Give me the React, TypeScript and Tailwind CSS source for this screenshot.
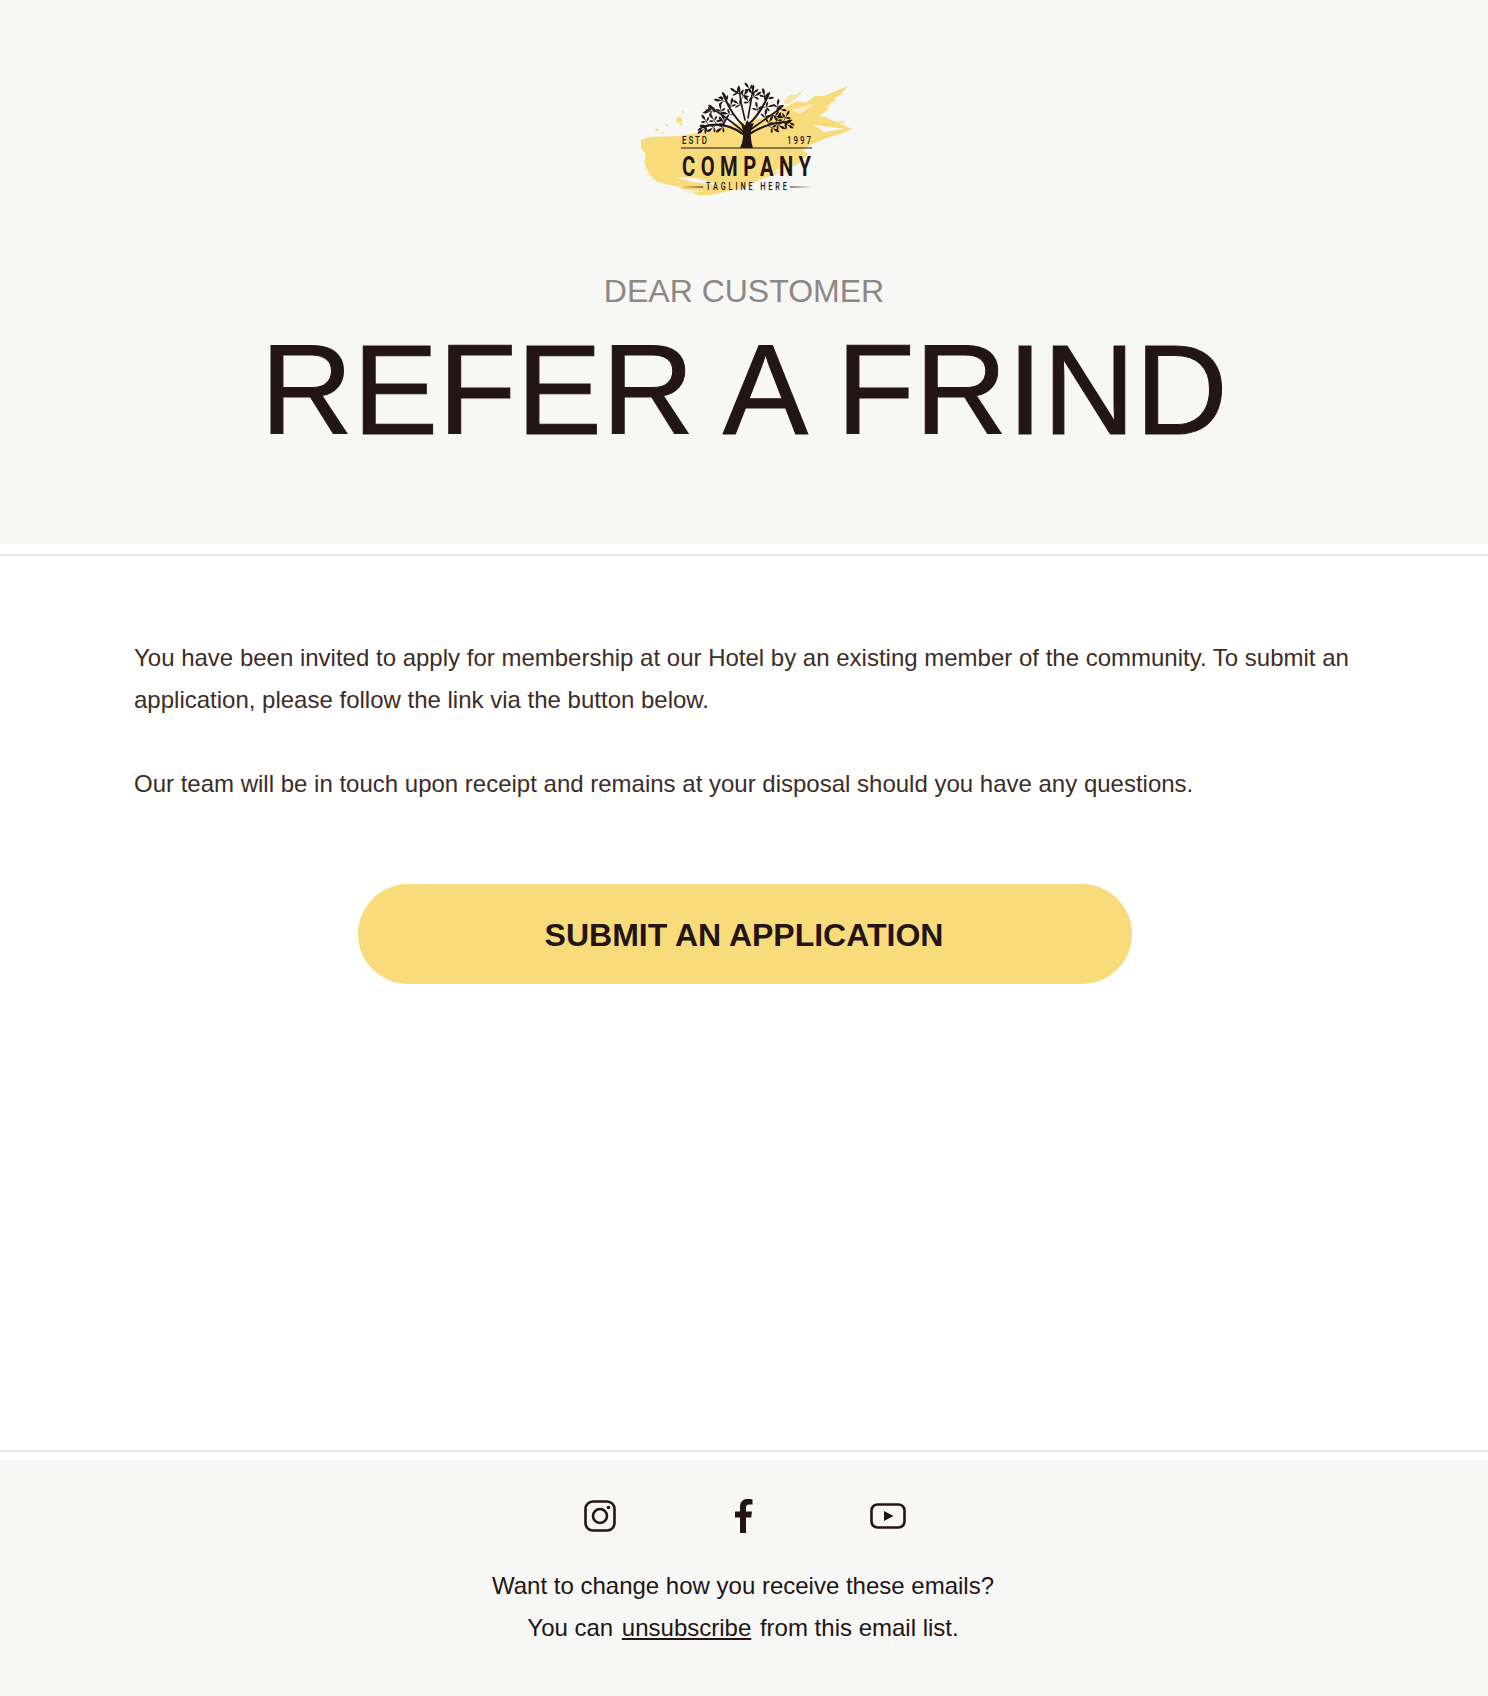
import React from "react";

type Pt = [number, number];
type Limb = { p0: Pt; c: Pt; p1: Pt; w: number };

const limbs: Limb[] = [
  { p0: [125, 56], c: [113, 46], p1: [105, 26], w: 2 },
  { p0: [126, 50], c: [122, 34], p1: [120, 20], w: 1.6 },
  { p0: [129, 48], c: [132, 32], p1: [134, 19], w: 1.6 },
  { p0: [130, 54], c: [141, 44], p1: [149, 26], w: 2 },
  { p0: [125, 62], c: [106, 46], p1: [92, 38], w: 1.7 },
  { p0: [131, 60], c: [148, 48], p1: [162, 38], w: 1.7 },
  { p0: [124, 64], c: [104, 50], p1: [84, 57], w: 2.2 },
  { p0: [132, 63], c: [150, 52], p1: [170, 52], w: 2.2 },
];

const at = (l: Limb, t: number): Pt => [
  (1 - t) * (1 - t) * l.p0[0] + 2 * (1 - t) * t * l.c[0] + t * t * l.p1[0],
  (1 - t) * (1 - t) * l.p0[1] + 2 * (1 - t) * t * l.c[1] + t * t * l.p1[1],
];

const { twigs, leaves } = (() => {
  const twigs: string[] = [];
  const leaves: { x: number; y: number; r: number; s: number }[] = [];
  let seed = 41;
  const rnd = () => {
    seed = (seed * 9301 + 49297) % 233280;
    return seed / 233280;
  };
  limbs.forEach((l, li) => {
    const steps = li >= 6 ? [0.45, 0.65, 0.85] : [0.45, 0.65, 0.85];
    const dir = Math.atan2(l.p1[1] - l.p0[1], l.p1[0] - l.p0[0]);
    steps.forEach((t, i) => {
      const [x, y] = at(l, t);
      const sides = li >= 6 ? [1, -1] : [i % 2 ? 1 : -1];
      sides.forEach((side) => {
        const a = dir + side * 0.8;
        const len = 5 + rnd() * 3;
        const ex = x + Math.cos(a) * len;
        const ey = y + Math.sin(a) * len;
        twigs.push(`M${x.toFixed(1)} ${y.toFixed(1)}L${ex.toFixed(1)} ${ey.toFixed(1)}`);
        const deg = (a * 180) / Math.PI + 90;
        leaves.push({ x: ex + Math.cos(a) * 2.6, y: ey + Math.sin(a) * 2.6, r: deg, s: 0.85 + rnd() * 0.2 });
        leaves.push({ x: ex - Math.cos(a) * 1.5 + Math.cos(a + 1.57) * 2.6, y: ey - Math.sin(a) * 1.5 + Math.sin(a + 1.57) * 2.6, r: deg + 60, s: 0.75 });
        leaves.push({ x: ex - Math.cos(a) * 1.5 - Math.cos(a + 1.57) * 2.6, y: ey - Math.sin(a) * 1.5 - Math.sin(a + 1.57) * 2.6, r: deg - 60, s: 0.75 });
      });
    });
    const [ex, ey] = l.p1;
    const deg = (dir * 180) / Math.PI + 90;
    leaves.push({ x: ex, y: ey - 1, r: deg, s: 1 });
    leaves.push({ x: ex - 3, y: ey + 2, r: deg - 45, s: 0.85 });
    leaves.push({ x: ex + 3, y: ey + 2, r: deg + 45, s: 0.85 });
  });
  return { twigs, leaves };
})();

function NarrowText(props: { x: number; y: number; size: number; width: number; sx: number; weight?: number; children: string }) {
  const { x, y, size, width, sx, weight = 400, children } = props;
  return (
    <text
      transform={`translate(${x} ${y}) scale(${sx} 1)`}
      fontSize={size}
      fontWeight={weight}
      textLength={width / sx}
      fontFamily="'Roboto', sans-serif"
    >
      {children}
    </text>
  );
}

function Logo() {
  return (
    <svg viewBox="0 0 250 130" className="w-[250px] h-[130px] block" aria-label="Company logo">
      <g fill="#f8dc7c">
        <path d="M22 70L30 67L60 66L90 61L112 55L150 46L165 38L178 31L186 33L196 26L205 26L229 16L222 24L214 28L218 29L207 37L211 38L200 46L206 47L233 59L224 63L208 68L193 74L183 80L190 84L177 95L160 103L140 110L125 118L105 122L92 125L80 125L68 122L60 117L50 115L38 112L30 104L25 92L27 85L22 78Z" />
        <path d="M164 32L172 24L176 25L186 19L178 28L168 35Z" opacity="0.7" />
        <path d="M206 29L226 22L216 28Z" opacity="0.5" />
        <path d="M190 62L222 50L228 52L198 66Z" opacity="0.6" />
        <circle cx="60" cy="50" r="3" />
        <circle cx="62" cy="54" r="1.6" />
        <circle cx="48" cy="55" r="1.1" />
        <circle cx="38" cy="60" r="1.6" />
        <circle cx="64" cy="42" r="1.2" />
        <circle cx="44" cy="63" r="0.9" />
      </g>
      <g fill="#f7f7f5">
        <path d="M56 107L76 108L96 113L98 115L74 112Z" />
        <path d="M195 55L226 59L205 62Z" />
        <path d="M172 40L196 33L182 44Z" opacity="0.6" />
        <path d="M60 119L84 121L72 123Z" opacity="0.7" />
        <path d="M150 103L176 92L168 100Z" opacity="0.8" />
      </g>
      <g fill="none" stroke="#231416" strokeLinecap="round">
        {limbs.map((l, i) => (
          <path key={i} d={`M${l.p0[0]} ${l.p0[1]}Q${l.c[0]} ${l.c[1]} ${l.p1[0]} ${l.p1[1]}`} strokeWidth={l.w} />
        ))}
        {twigs.map((d, i) => (
          <path key={i} d={d} strokeWidth="0.7" />
        ))}
      </g>
      <g fill="#231416">
        {leaves.map((l, i) => (
          <path
            key={i}
            d="M0 -3.5C1.7 -2 1.7 1.5 0 3.5C-1.7 1.5 -1.7 -2 0 -3.5Z"
            transform={`translate(${l.x.toFixed(1)} ${l.y.toFixed(1)}) rotate(${l.r.toFixed(0)}) scale(${l.s.toFixed(2)})`}
          />
        ))}
        <path d="M121 78C124 72 124.5 66 124 60L122 54L126 56L128 50L131 54L135 53L132 60C131.5 66 132 72 134 78Z" />
        <rect x="62" y="77.5" width="131" height="1" />
        <path d="M62 117L84 116.4V117.6Z" />
        <path d="M193 117L171 116.4V117.6Z" />
        <NarrowText x={63} y={74} size={11} width={25} sx={0.72} weight={500}>ESTD</NarrowText>
        <NarrowText x={168} y={74} size={11} width={24} sx={0.72} weight={500}>1997</NarrowText>
        <NarrowText x={63} y={106} size={28} width={129} sx={0.72} weight={700}>COMPANY</NarrowText>
        <NarrowText x={87} y={120} size={10.5} width={81} sx={0.7} weight={500}>TAGLINE HERE</NarrowText>
      </g>
    </svg>
  );
}

function Instagram() {
  return (
    <svg viewBox="0 0 32 32" className="w-8 h-8 block" fill="none" stroke="#231416" strokeWidth="2.6">
      <rect x="1.5" y="1.5" width="29" height="29" rx="7.5" />
      <circle cx="16" cy="16" r="7" />
      <circle cx="24.5" cy="7.5" r="1.8" fill="#231416" stroke="none" />
    </svg>
  );
}

function Facebook() {
  return (
    <svg viewBox="0 0 18 34" className="w-[18px] h-[34px] block" fill="#231416">
      <path d="M5 34V18.5H0V12.5H5V8C5 2.5 8.5 0 12.5 0C14.5 0 16.5 0.2 17.5 0.4V5.5H14.5C12 5.5 11 6.5 11 8.5V12.5H17L16.2 18.5H11V34Z" />
    </svg>
  );
}

function Youtube() {
  return (
    <svg viewBox="0 0 36 26" className="w-9 h-[26px] block" fill="none" stroke="#231416" strokeWidth="2.6">
      <rect x="1.5" y="1.5" width="33" height="23" rx="6" />
      <path d="M14 8L23.5 13L14 18Z" fill="#231416" stroke="none" />
    </svg>
  );
}

export default function App() {
  return (
    <div className="min-h-[1696px] bg-white font-['Liberation_Sans',Arial,sans-serif] flex flex-col">
      <header className="h-[544px] bg-[#f7f7f5] pt-[70px] flex flex-col items-center">
        <Logo />
        <p className="mt-[71px] text-[32px] leading-[40px] text-[#8c8885]">DEAR CUSTOMER</p>
        <h1 className="mt-[15px] text-[128px] leading-[128px] text-[#231416] [-webkit-text-stroke:1px_#231416]">REFER A FRIND</h1>
      </header>
      <div className="mt-[10px] h-[2px] bg-[#e8e8e8]" />
      <main className="h-[894px] px-[134px] pt-[81px] text-[24px] leading-[42px] text-[#3e2c27]">
        <p>
          You have been invited to apply for membership at our Hotel by an existing member of the community. To submit an application, please follow the link via the button below.
        </p>
        <p className="mt-[42px]">Our team will be in touch upon receipt and remains at your disposal should you have any questions.</p>
        <div className="mt-[79px] flex justify-center pl-[2px]">
          <a className="w-[774px] h-[100px] pt-[1px] pr-[2px] rounded-[50px] bg-[#f8dc7c] flex items-center justify-center text-[32px] font-bold text-[#231416]">
            SUBMIT AN APPLICATION
          </a>
        </div>
      </main>
      <div className="h-[2px] bg-[#e8e8e8]" />
      <footer className="mt-[8px] h-[236px] bg-[#f7f7f5] pt-[38px] flex flex-col items-center text-[24px] leading-[42px] text-[#231416]">
        <div className="h-[36px] flex items-center">
          <div className="w-[144px] flex justify-center"><Instagram /></div>
          <div className="w-[144px] flex justify-center"><Facebook /></div>
          <div className="w-[144px] flex justify-center"><Youtube /></div>
        </div>
        <p className="mt-[31px] pr-[2px]">Want to change how you receive these emails?</p>
        <p className="pr-[2px]">
          You can <a className="underline mx-[2px]">unsubscribe</a> from this email list.
        </p>
      </footer>
    </div>
  );
}
